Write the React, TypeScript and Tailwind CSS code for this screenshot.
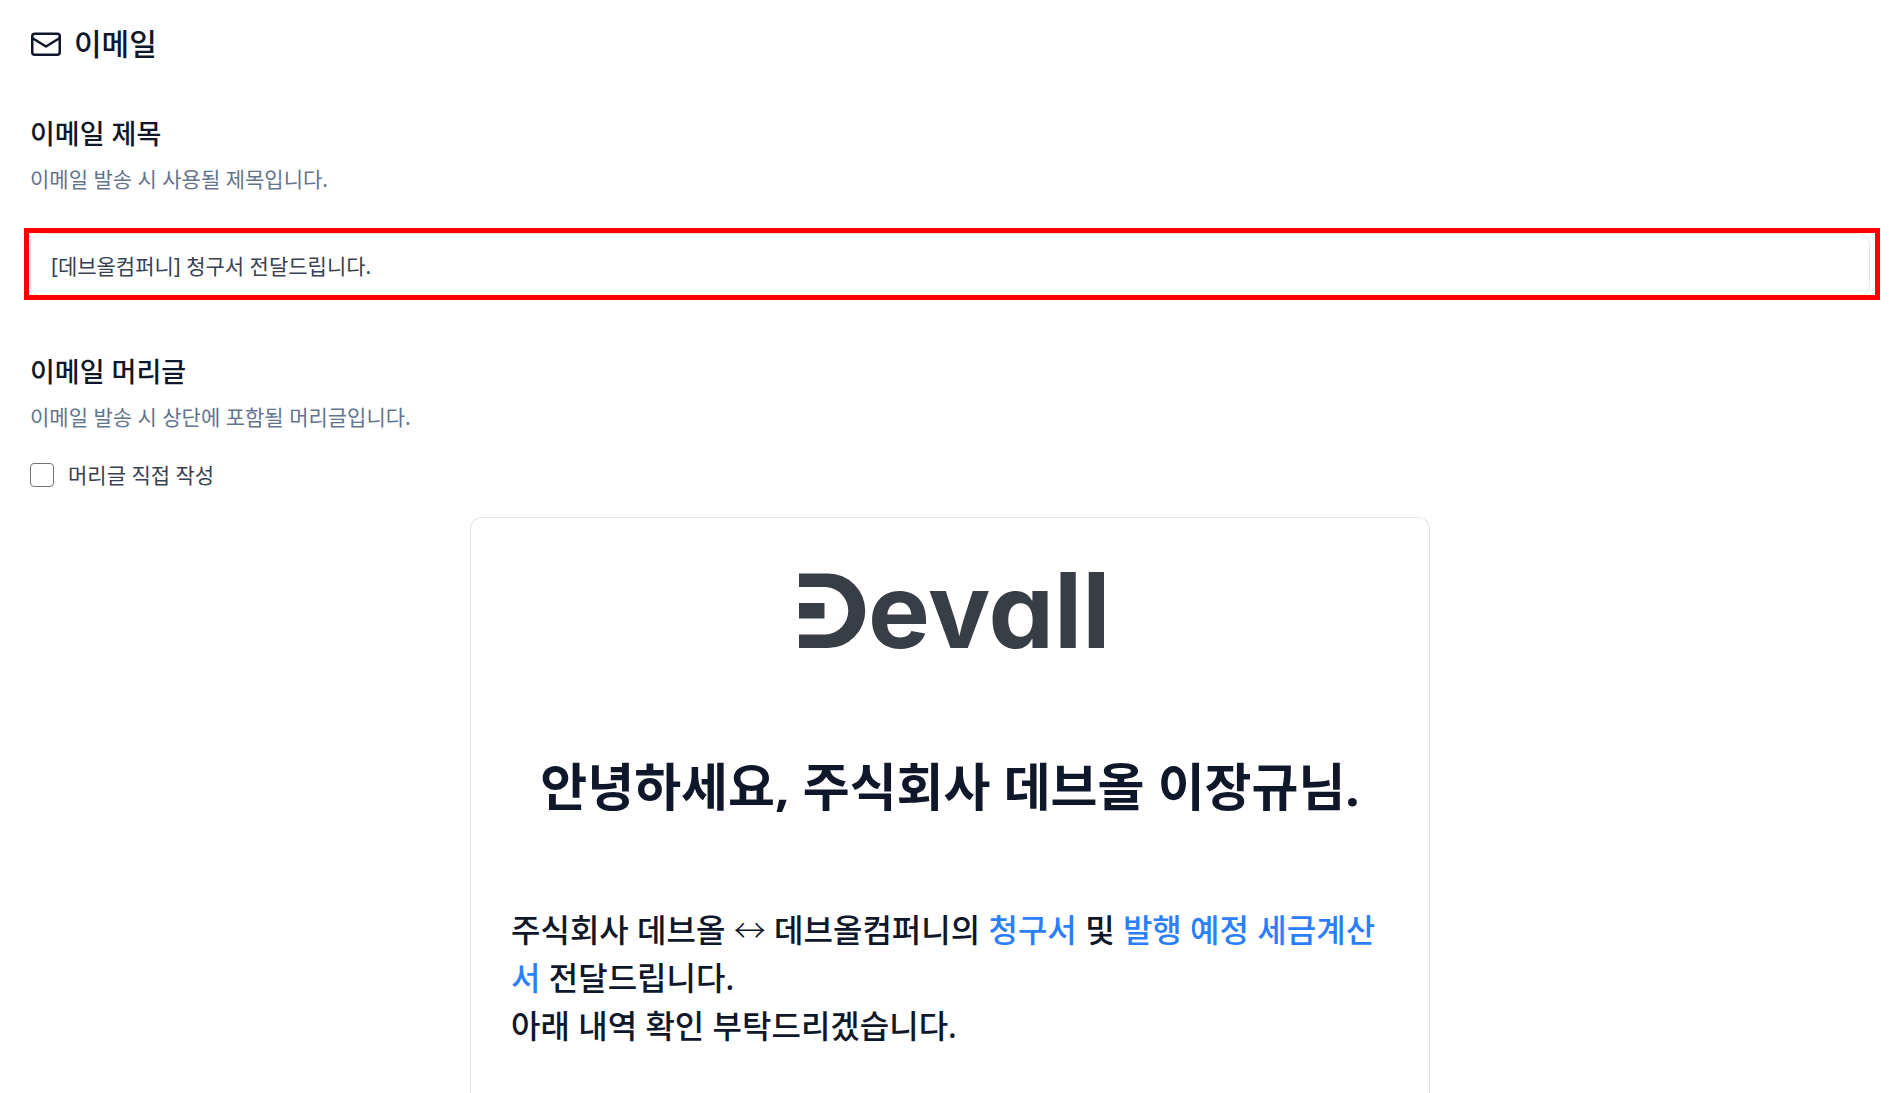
import { useState, type ReactNode } from 'react'

interface SectionHeadingProps {
  title: string
  description: string
}

function MailIcon() {
  return (
    <svg
      className="h-6 w-8"
      viewBox="0 0 32 24"
      fill="none"
      stroke="currentColor"
      strokeWidth={2.5}
      strokeLinecap="round"
      strokeLinejoin="round"
      aria-hidden="true"
    >
      <rect x="2.25" y="1.75" width="27.5" height="21" rx="2.5" />
      <path d="M2.25 6L16 14.5L29.75 6" />
    </svg>
  )
}

function DevallLogo() {
  return (
    <svg
      className="h-20 w-[304px] overflow-visible text-[#383e46]"
      viewBox="0 0 304 80"
      fill="currentColor"
      role="img"
      aria-label="Devall"
    >
      {/* symbol */}
      <path d="M1 3.5H30A37.2 37.2 0 0 1 30 78H1V64.5H28A23.8 23.8 0 0 0 28 17H1Z" />
      <rect x="1" y="33" width="25.5" height="15.5" />
      {/* wordmark, cv11 is the single-storey a */}
      <text x="70" y="78" className="font-['Inter',sans-serif] text-[104px] font-bold [font-feature-settings:'cv11']">
        evall
      </text>
    </svg>
  )
}

function SectionHeading({ title, description }: SectionHeadingProps) {
  return (
    <div className="flex flex-col gap-[13px]">
      <h2 className="text-[27px] leading-9 font-medium">{title}</h2>
      <p className="text-[21px] leading-7 text-slate-500">{description}</p>
    </div>
  )
}

function Highlight({ children }: { children: ReactNode }) {
  return <span className="text-[#2b7fff]">{children}</span>
}

export default function App() {
  const [subject, setSubject] = useState('[데브올컴퍼니] 청구서 전달드립니다.')
  const [customHeader, setCustomHeader] = useState(false)

  return (
    <main className="bg-white px-[30px] pt-6 font-['Noto_Sans','Noto_Sans_CJK_KR',sans-serif] text-[#0f172a]">
      <header className="flex items-center gap-3">
        <MailIcon />
        <h1 className="text-[30px] leading-10 font-medium">이메일</h1>
      </header>

      <section className="mt-[52px]">
        <SectionHeading title="이메일 제목" description="이메일 발송 시 사용될 제목입니다." />
        <div className="relative mt-10">
          <input
            type="text"
            aria-label="이메일 제목"
            value={subject}
            onChange={(e) => setSubject(e.target.value)}
            className="block h-16 w-full rounded-xl border border-neutral-200 px-5 text-[21px] text-gray-700 outline-none"
          />
          <div className="pointer-events-none absolute -top-[5px] -right-[10px] -bottom-[3px] -left-[6px] border-5 border-[#ff0000]" />
        </div>
      </section>

      <section className="mt-[57px]">
        <SectionHeading title="이메일 머리글" description="이메일 발송 시 상단에 포함될 머리글입니다." />
        <label className="mt-[30px] flex items-center gap-3.5 text-[21px] leading-7 text-gray-700">
          <input
            type="checkbox"
            checked={customHeader}
            onChange={(e) => setCustomHeader(e.target.checked)}
            className="size-6 appearance-none rounded border border-neutral-500 checked:bg-[#2b7fff]"
          />
          머리글 직접 작성
        </label>

        <article className="mx-auto mt-7 max-w-[960px] rounded-t-xl border border-b-0 border-neutral-200 px-10 pt-[52px] pb-16">
          <div className="flex justify-center">
            <DevallLogo />
          </div>
          <h2 className="mt-[104px] text-center text-[51px] leading-16 font-bold">
            안녕하세요, 주식회사 데브올 이장규님.
          </h2>
          <p className="mt-[88px] text-[32px] leading-12 font-medium">
            주식회사 데브올 <span className="font-light">↔</span> 데브올컴퍼니의 <Highlight>청구서</Highlight> 및{' '}
            <Highlight>발행 예정 세금계산서</Highlight> 전달드립니다.
            <br />
            아래 내역 확인 부탁드리겠습니다.
          </p>
        </article>
      </section>
    </main>
  )
}
